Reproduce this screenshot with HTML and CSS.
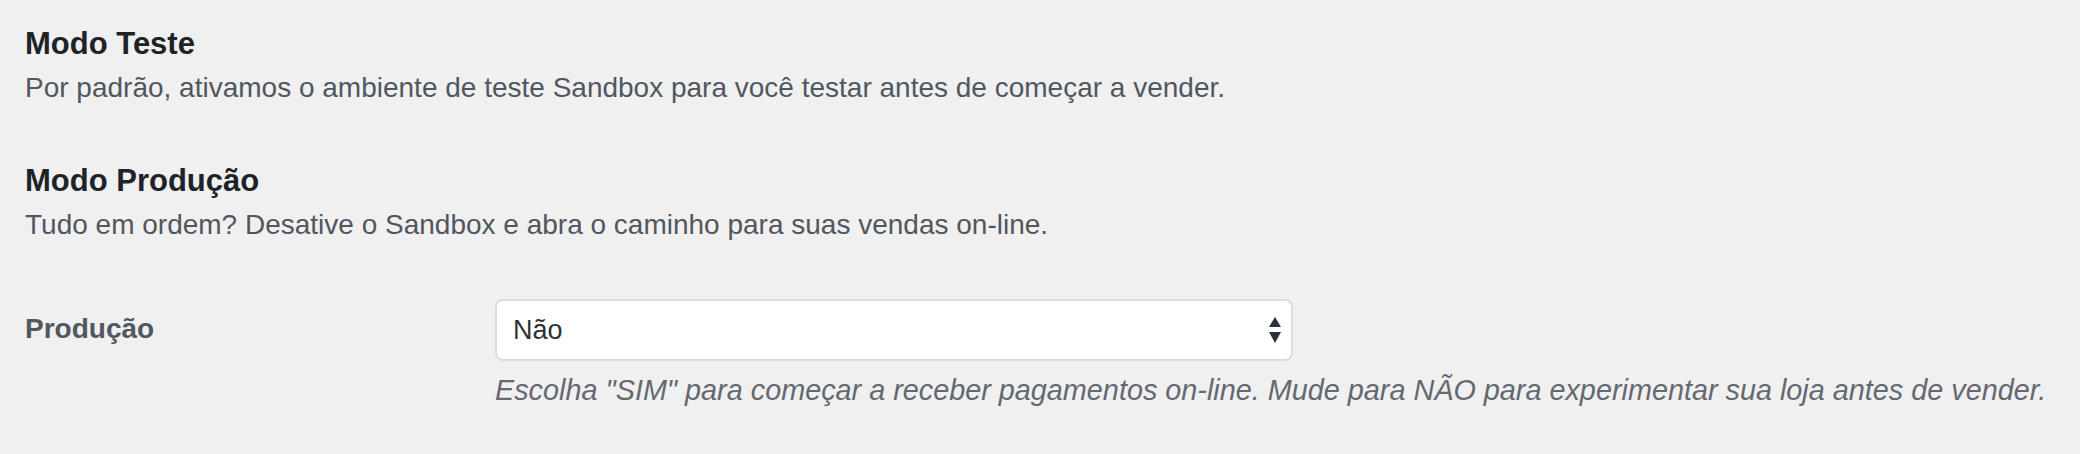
FILE: index.html
```html
<!DOCTYPE html>
<html lang="pt-BR">
<head>
<meta charset="utf-8">
<title>Modo Teste</title>
<link rel="stylesheet" href="styles.css">
</head>
<body>
<div class="page">
  <section class="block">
    <h2 class="title">Modo Teste</h2>
    <p class="text">Por padrão, ativamos o ambiente de teste Sandbox para você testar antes de começar a vender.</p>
  </section>
  <section class="block block-second">
    <h2 class="title">Modo Produção</h2>
    <p class="text">Tudo em ordem? Desative o Sandbox e abra o caminho para suas vendas on-line.</p>
  </section>
  <div class="form-row">
    <div class="label">Produção</div>
    <div class="field">
      <div class="select">
        <span class="select-value">Não</span>
        <svg class="arrows" width="12" height="26" viewBox="0 0 12 26" aria-hidden="true">
          <path d="M6 0 L12 10 L0 10 Z" fill="#2c3338"/>
          <path d="M0 15 L12 15 L6 26 Z" fill="#2c3338"/>
        </svg>
      </div>
      <p class="desc">Escolha "SIM" para começar a receber pagamentos on-line. Mude para NÃO para experimentar sua loja antes de vender.</p>
    </div>
  </div>
</div>
</body>
</html>
```

FILE: styles.css
```css
html, body {
  margin: 0;
  padding: 0;
  background: #f0f0f1;
}

body {
  font-family: "Liberation Sans", Arial, Helvetica, sans-serif;
  color: #3c434a;
}

.page {
  padding: 24px 25px 0 25px;
}

.title {
  margin: 0;
  font-size: 31px;
  line-height: 40px;
  font-weight: bold;
  color: #1d2327;
}

.text {
  margin: 4px 0 0 0;
  font-size: 28px;
  line-height: 40px;
  color: #50575e;
}

.block-second {
  margin-top: 53px;
}

.form-row {
  display: flex;
  margin-top: 54px;
}

.label {
  width: 470px;
  flex: none;
  font-size: 28px;
  font-weight: bold;
  line-height: 40px;
  color: #50575e;
  padding-top: 10px;
}

.field {
  display: flex;
  flex-direction: column;
}

.select {
  box-sizing: border-box;
  width: 798px;
  height: 62px;
  background: #fff;
  border: 2px solid #dcdcde;
  border-radius: 8px;
  display: flex;
  align-items: center;
  justify-content: space-between;
  padding: 0 10px 0 16px;
}

.select-value {
  font-size: 27px;
  color: #2c3338;
  line-height: 40px;
}

.arrows {
  display: block;
}

.desc {
  margin: 9px 0 0 0;
  font-size: 28.8px;
  line-height: 40px;
  font-style: italic;
  color: #646970;
  white-space: nowrap;
}
```
